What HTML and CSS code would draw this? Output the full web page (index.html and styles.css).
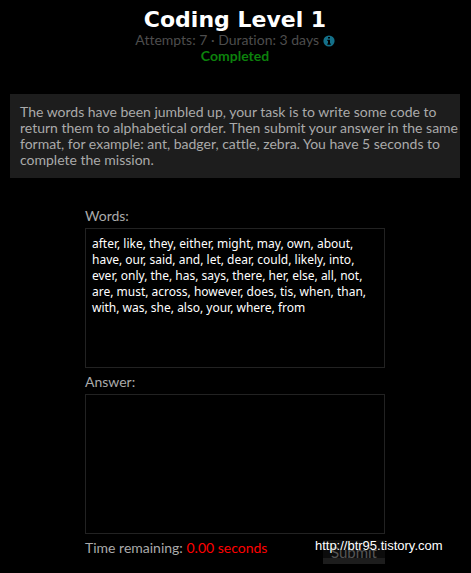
FILE: index.html
```
<!DOCTYPE html>
<html lang="en">
<head>
    <meta charset="utf-8">
    <title>Coding Level 1</title>
    <link rel="stylesheet" href="styles.css">
</head>
<body>
    <header class="level-header">
        <h1>Coding Level 1</h1>
        <p class="level-info">Attempts: 7 · Duration: 3 days
            <svg class="info-icon" viewBox="0 0 12 12" aria-hidden="true">
                <circle cx="6" cy="6" r="5.6" fill="#147089"/>
                <path d="M5 2h2v1.6H5zM4.3 4.7H7v3.7h.8v1.3H4.3V8.4H5V6h-.7z" fill="#000"/>
            </svg>
        </p>
        <p class="level-status">Completed</p>
    </header>

    <div class="info">The words have been jumbled up, your task is to write some code to return them to alphabetical order. Then submit your answer in the same format, for example: ant, badger, cattle, zebra. You have 5 seconds to complete the mission.</div>

    <form class="level-form" id="levelForm">
        <label for="words">Words:</label>
        <textarea id="words" readonly>after, like, they, either, might, may, own, about, have, our, said, and, let, dear, could, likely, into, ever, only, the, has, says, there, her, else, all, not, are, must, across, however, does, tis, when, than, with, was, she, also, your, where, from</textarea>

        <label for="answer">Answer:</label>
        <textarea id="answer" name="answer"></textarea>

        <div class="form-footer">
            <p>Time remaining: <span class="time">0.00 seconds</span></p>
            <div class="submit-wrap">
                <button type="submit">Submit</button>
                <span class="watermark">http://btr95.tistory.com</span>
            </div>
        </div>
    </form>
</body>
</html>
```

FILE: styles.css
```
body {
    margin: 0;
    padding: 8px 11px 8px 10px;
    background-color: #000;
    color: #aaa;
    font-family: Lato, sans-serif;
    font-size: 14px;
    font-variant-ligatures: none;
    line-height: 16px;
}

h1,
p {
    margin: 0;
}

.level-header {
    margin-bottom: 30px;
    text-align: center;
}

h1 {
    color: #fff;
    font-family: "DejaVu Sans", sans-serif;
    font-size: 22px;
    font-weight: bold;
    line-height: 24px;
}

.level-info {
    color: #4d4d4d;
}

.info-icon {
    width: 12px;
    height: 12px;
    vertical-align: -2px;
}

.level-status {
    color: #0c820c;
    font-weight: bold;
}

.info {
    padding: 10px 0 10px 10px;
    background-color: #1d1d1d;
}

.level-form {
    max-width: 300px;
    margin: 30px auto 0;
}

label {
    display: block;
    margin-bottom: 4px;
}

textarea {
    display: block;
    box-sizing: border-box;
    width: 100%;
    height: 140px;
    margin-bottom: 6px;
    padding: 7px 6px;
    border: 1px solid #222;
    background-color: #000;
    color: #fff;
    font-family: "Noto Sans", sans-serif;
    font-size: 12px;
    line-height: 16px;
    resize: none;
}

.form-footer {
    display: flex;
    justify-content: space-between;
}

.time {
    color: #f00;
}

.submit-wrap {
    position: relative;
}

button {
    display: block;
    height: 24px;
    padding: 4px 8px 0;
    border: none;
    border-bottom: 6px solid #1d1d1d;
    background-color: #0c0c0c;
    color: #555;
    font-family: Lato, sans-serif;
    font-size: 15px;
    line-height: 16px;
    cursor: pointer;
}

/* site address stamped over the button */
.watermark {
    position: absolute;
    top: -2px;
    left: -8px;
    color: #fff;
    font-family: "Liberation Sans", sans-serif;
    font-size: 13px;
    white-space: nowrap;
}
```
